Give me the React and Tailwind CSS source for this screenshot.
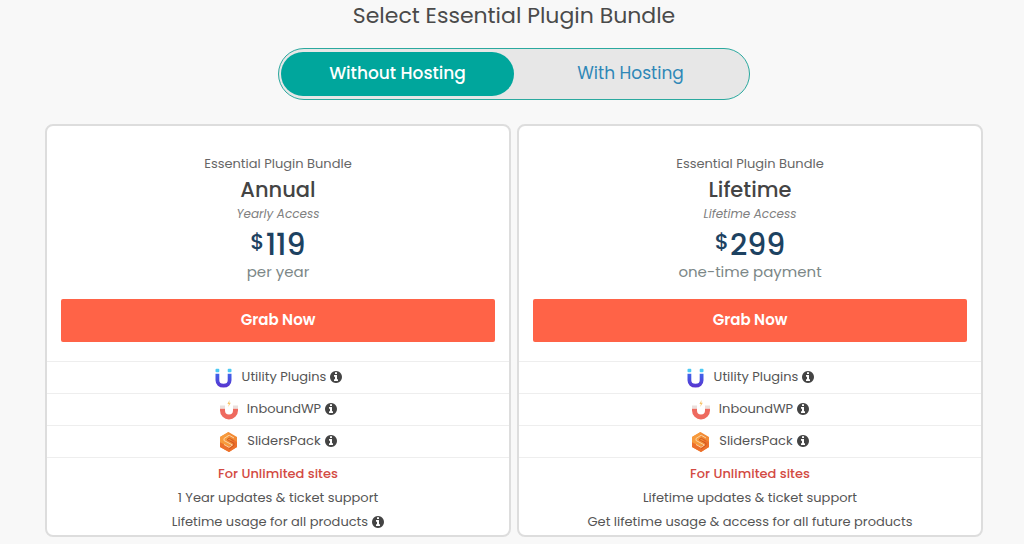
import { useState } from 'react';

const PLANS = [
    {
        name: 'Annual',
        access: 'Yearly Access',
        price: '119',
        period: 'per year',
        notes: [
            { text: '1 Year updates & ticket support' },
            { text: 'Lifetime usage for all products', info: true },
        ],
    },
    {
        name: 'Lifetime',
        access: 'Lifetime Access',
        price: '299',
        period: 'one-time payment',
        notes: [
            { text: 'Lifetime updates & ticket support' },
            { text: 'Get lifetime usage & access for all future products' },
        ],
    },
];

const PRODUCTS = [
    { name: 'Utility Plugins', Icon: UtilityIcon },
    { name: 'InboundWP', Icon: InboundIcon },
    { name: 'SlidersPack', Icon: SlidersIcon },
];

const HOSTING = ['Without Hosting', 'With Hosting'];

function UtilityIcon() {
    return (
        <svg className="h-5 w-5" viewBox="0 0 20 20" fill="none" aria-hidden="true">
            <defs>
                <linearGradient id="utility" x1="0" y1="6" x2="0" y2="19" gradientUnits="userSpaceOnUse">
                    <stop stopColor="#3f62ea" />
                    <stop offset="1" stopColor="#5a35cf" />
                </linearGradient>
            </defs>
            <path d="M3.400 5.800v6.400c0 3.400 2.500 5.500 6.100 5.500s6.100-2.100 6.100-5.500V5.800" stroke="url(#utility)" strokeWidth="3.800" />
            <rect x="1.500" y="0.800" width="3.800" height="3.400" rx="1" fill="#4cc9f3" />
            <rect x="13.700" y="0.800" width="3.800" height="3.400" rx="1" fill="#4cc9f3" />
        </svg>
    );
}

function InboundIcon() {
    return (
        <svg className="h-5 w-5" viewBox="0 0 20 20" fill="none" aria-hidden="true">
            <path d="M3.500 8.500v2a6.500 6.500 0 0 0 13 0v-2" stroke="#ee6a5f" strokeWidth="5" />
            <path d="M1 5.500h5v3H1zM14 5.500h5v3h-5z" fill="#eadfdc" />
            <path d="M10.600 0 8.400 3.900h1.500L9.200 7l2.600-4.200h-1.600z" fill="#f6c56b" />
        </svg>
    );
}

function SlidersIcon() {
    return (
        <svg className="h-5 w-5" viewBox="0 0 20 20" fill="none" aria-hidden="true">
            <path d="M9.500 0 18 5v10l-8 5-9-5V5z" fill="#f28a35" />
            <path d="M9.500 0 1 5v5l8.500 5 3-2-6-4 3-2z" fill="#f79a3c" />
            <path d="m18 10-4-2.500-3 2 3 2-4.500 3L1 10.500V15l9 5 8-5z" fill="#ec6f2c" />
            <path d="m15 6-4.800-2.800L5 6.500v2l8.500 4.500-3.500 2.300L5 12.500" stroke="#fbd3a4" />
            <path d="m14.500 8.500-4.300-2.300-2.200 1.300 7 3.800v2L10 17" stroke="#c9541c" strokeWidth="0.800" />
        </svg>
    );
}

function InfoIcon() {
    return (
        <svg className="h-3 w-3 shrink-0 fill-[#444444]" viewBox="0 128 1536 1536" aria-hidden="true">
            <path d="M1024 1376v-160q0-14-9-23t-23-9h-96v-512q0-14-9-23t-23-9h-320q-14 0-23 9t-9 23v160q0 14 9 23t23 9h96v320h-96q-14 0-23 9t-9 23v160q0 14 9 23t23 9h448q14 0 23-9t9-23zm-128-896v-160q0-14-9-23t-23-9h-192q-14 0-23 9t-9 23v160q0 14 9 23t23 9h192q14 0 23-9t9-23zm640 416q0 209-103 385.500t-279.500 279.500-385.500 103-385.500-103-279.500-279.500-103-385.500 103-385.500 279.500-279.500 385.500-103 385.500 103 279.500 279.500 103 385.500z" />
        </svg>
    );
}

function PlanCard({ plan }) {
    return (
        <section className="rounded-lg border-2 border-[#dddddd] bg-white pt-7 text-center">
            <div className="px-3.5">
                <p className="text-[13px] leading-5 text-[#666666]">Essential Plugin Bundle</p>
                <h2 className="text-[21px] leading-8 font-medium text-[#444444]">{plan.name}</h2>
                <p className="text-xs leading-4 text-[#808080] italic">{plan.access}</p>
                <p className="mt-1.5 flex items-start justify-center gap-px text-[#1d4261]">
                    <span className="text-[22px] leading-7 font-medium">$</span>
                    <span className="text-[30px] leading-[34px] font-medium">{plan.price}</span>
                </p>
                <p className="text-[15px] leading-5 text-[#7c8787]">{plan.period}</p>
                <button
                    type="button"
                    className="mt-[17px] h-[43px] w-full rounded-xs bg-[#ff6347] text-[15px] font-semibold text-white hover:bg-[#f0523a]"
                >
                    Grab Now
                </button>
            </div>

            <ul className="mt-[19px] text-[13px] text-[#555555]">
                {PRODUCTS.map(({ name, Icon }) => (
                    <li key={name} className="flex h-8 items-center justify-center border-t border-[#eeeeee]">
                        <Icon />
                        <span className="flex items-center gap-1 pb-0.5 pl-2">
                            {name}
                            <InfoIcon />
                        </span>
                    </li>
                ))}
            </ul>

            <div className="border-t border-[#eeeeee] pt-1 pb-px text-[13px] leading-6 text-[#555555]">
                <p className="font-medium text-[#d34a43]">For Unlimited sites</p>
                {plan.notes.map(note => (
                    <p key={note.text} className="flex items-center justify-center gap-1">
                        {note.text}
                        {note.info && <InfoIcon />}
                    </p>
                ))}
            </div>
        </section>
    );
}

export default function App() {
    const [hosting, setHosting] = useState(HOSTING[0]);

    return (
        <main className="min-h-screen bg-[#f8f8f8] pr-[41px] pl-[45px] font-['Poppins','Inter',sans-serif]">
            <h1 className="text-center text-[22px] leading-8 text-[#4a4a4a]">Select Essential Plugin Bundle</h1>

            {/* Hosting switch */}
            <div className="mx-auto mt-4 flex h-[52px] max-w-[472px] rounded-full border border-[#2ba99f] bg-[#e7e7e7] px-0.5 py-[3px]">
                {HOSTING.map(option => (
                    <button
                        key={option}
                        type="button"
                        aria-pressed={hosting === option}
                        onClick={() => setHosting(option)}
                        className={`flex-1 rounded-full text-[17px] ${hosting === option ? 'bg-[#00a69c] font-medium text-white' : 'text-[#2f87b7]'
                            }`}
                    >
                        {option}
                    </button>
                ))}
            </div>

            <div className="mt-6 grid grid-cols-2 gap-1.5">
                {PLANS.map(plan => (
                    <PlanCard key={plan.name} plan={plan} />
                ))}
            </div>
        </main>
    );
}
